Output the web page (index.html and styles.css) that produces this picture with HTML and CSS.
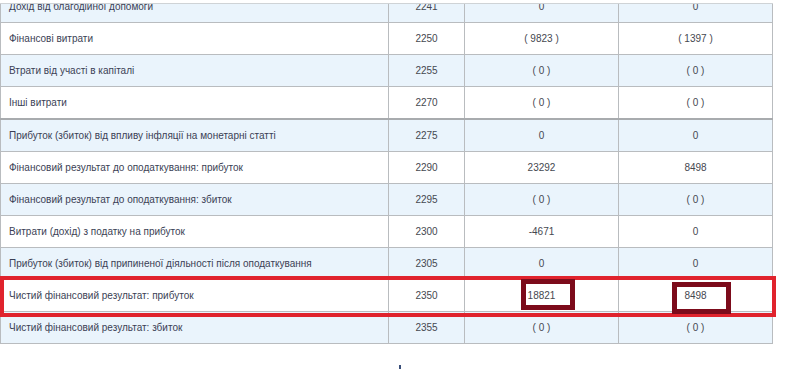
FILE: index.html
```html
<!DOCTYPE html>
<html lang="uk">
<head>
<meta charset="utf-8">
<link rel="stylesheet" href="styles.css">
</head>
<body>
<div class="page">
  <table class="report">
    <colgroup>
      <col class="c-label"><col class="c-code"><col class="c-val"><col class="c-val">
    </colgroup>
    <tbody>
      <tr class="odd"><td class="label">Дохід від благодійної допомоги</td><td class="code">2241</td><td class="val">0</td><td class="val">0</td></tr>
      <tr><td class="label">Фінансові витрати</td><td class="code">2250</td><td class="val">( 9823 )</td><td class="val">( 1397 )</td></tr>
      <tr class="odd"><td class="label">Втрати від участі в капіталі</td><td class="code">2255</td><td class="val">( 0 )</td><td class="val">( 0 )</td></tr>
      <tr><td class="label">Інші витрати</td><td class="code">2270</td><td class="val">( 0 )</td><td class="val">( 0 )</td></tr>
      <tr class="odd sep"><td class="label">Прибуток (збиток) від впливу інфляції на монетарні статті</td><td class="code">2275</td><td class="val">0</td><td class="val">0</td></tr>
      <tr><td class="label">Фінансовий результат до оподаткування: прибуток</td><td class="code">2290</td><td class="val">23292</td><td class="val">8498</td></tr>
      <tr class="odd"><td class="label">Фінансовий результат до оподаткування: збиток</td><td class="code">2295</td><td class="val">( 0 )</td><td class="val">( 0 )</td></tr>
      <tr><td class="label">Витрати (дохід) з податку на прибуток</td><td class="code">2300</td><td class="val">-4671</td><td class="val">0</td></tr>
      <tr class="odd"><td class="label">Прибуток (збиток) від припиненої діяльності після оподаткування</td><td class="code">2305</td><td class="val">0</td><td class="val">0</td></tr>
      <tr><td class="label">Чистий фінансовий результат: прибуток</td><td class="code">2350</td><td class="val">18821</td><td class="val">8498</td></tr>
      <tr class="odd"><td class="label">Чистий фінансовий результат: збиток</td><td class="code">2355</td><td class="val">( 0 )</td><td class="val">( 0 )</td></tr>
    </tbody>
  </table>
  <div class="topcut"></div>
  <div class="mark-row"></div>
  <div class="mark-cell mark-a"></div>
  <div class="mark-cell mark-b"></div>
  <div class="tick"></div>
</div>
</body>
</html>
```

FILE: styles.css
```css
html, body {
  margin: 0;
  padding: 0;
  background: #ffffff;
}

.page {
  position: relative;
  width: 800px;
  height: 371px;
  overflow: hidden;
  font-family: "Liberation Sans", Arial, sans-serif;
  font-size: 10px;
}

.report {
  border-collapse: collapse;
  table-layout: fixed;
  width: 773px;
  margin-top: -10px;
}

.c-label { width: 388px; }
.c-code { width: 76px; }
.c-val { width: 154px; }

.report td {
  border: 1px solid #b9bcbf;
  height: 31px;
  padding: 0;
  vertical-align: middle;
  color: #454850;
  white-space: nowrap;
}

.report tr.odd td {
  background: #eaf4fc;
}

.report tr.sep td {
  border-top: 2px solid #a8abae;
}

.report td.label {
  padding-left: 8px;
  color: #3b3f55;
}

.report td.code,
.report td.val {
  text-align: center;
}

.topcut {
  position: absolute;
  left: 0;
  top: 0;
  width: 773px;
  height: 3px;
  background: #ffffff;
  border-bottom: 1px solid #cfd3d6;
}

.mark-row {
  position: absolute;
  left: 0;
  top: 276px;
  width: 768px;
  height: 33px;
  border: 4px solid #e0232d;
}

.mark-cell {
  position: absolute;
  border: 5px solid #7c0b1b;
}

.mark-a {
  left: 521px;
  top: 279px;
  width: 44px;
  height: 21px;
}

.mark-b {
  left: 672px;
  top: 282px;
  width: 49px;
  height: 22px;
}

.tick {
  position: absolute;
  left: 399px;
  top: 365px;
  width: 2px;
  height: 4px;
  background: #3a4f7a;
}
```
